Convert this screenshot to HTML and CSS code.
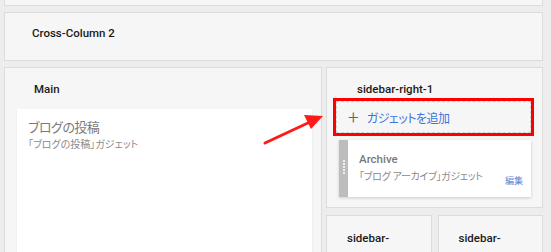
FILE: index.html
```html
<!DOCTYPE html>
<html lang="ja">
<head>
  <meta charset="UTF-8" />
  <title>Layout</title>
  <link rel="stylesheet" href="styles.css">
</head>
<body>

<div class="layout">
  <div class="section top-cut"></div>

  <div class="section cross">
    <div class="section-title">Cross-Column 2</div>
  </div>

  <div class="columns">
    <div class="section main">
      <div class="section-title">Main</div>
      <div class="widget-card">
        <div class="widget-name">ブログの投稿</div>
        <div class="widget-type">「ブログの投稿」ガジェット</div>
      </div>
    </div>

    <div class="sidebar">
      <div class="section side-one">
        <div class="section-title">sidebar-right-1</div>
        <div class="highlight">
          <div class="add-gadget">
            <span class="plus">+</span>
            <span class="add-text">ガジェットを追加</span>
          </div>
        </div>
        <div class="gadget">
          <div class="handle"><span class="dots"></span></div>
          <div class="gadget-body">
            <div class="gadget-name">Archive</div>
            <div class="gadget-type">「ブログ アーカイブ」ガジェット</div>
            <div class="edit">編集</div>
          </div>
        </div>
      </div>

      <div class="side-row">
        <div class="section small">
          <div class="section-title">sidebar-right-2-1</div>
        </div>
        <div class="section small">
          <div class="section-title">sidebar-right-2-2</div>
        </div>
      </div>
    </div>
  </div>
</div>

<svg class="arrow" width="551" height="252" viewBox="0 0 551 252">
  <line x1="265" y1="143" x2="310" y2="122" stroke="#ff1a1a" stroke-width="3" stroke-linecap="round"/>
  <polygon points="323,116 304,115 311,129" fill="#ff1a1a"/>
</svg>

</body>
</html>
```

FILE: styles.css
```css
body {
  margin: 0;
  background: #ededed;
  font-family: Roboto, "Noto Sans CJK JP", sans-serif;
  font-feature-settings: "palt";
  overflow: hidden;
  height: 252px;
}

.layout {
  width: 539px;
  margin-left: 4px;
  display: flex;
  flex-direction: column;
  gap: 6px;
}

.section {
  background: #f6f6f6;
  border: 1px solid #dcdcdc;
  box-sizing: border-box;
}

.top-cut {
  height: 6px;
  border-top: none;
}

.section-title {
  font-size: 11.5px;
  line-height: 16px;
  font-weight: 500;
  color: #1a1a1a;
}

.cross {
  height: 49px;
  padding: 12px 27px;
}

.columns {
  display: flex;
  gap: 4px;
  align-items: flex-start;
}

.main {
  width: 318px;
  height: 200px;
  padding: 13px 9px 0 12px;
}

.main .section-title {
  padding-left: 17px;
  margin-bottom: 12px;
}

.widget-card {
  background: #fff;
  height: 160px;
  padding: 10px 11px;
  box-shadow: 0 1px 2px rgba(0, 0, 0, 0.08);
}

.widget-name {
  font-size: 13px;
  line-height: 18px;
  letter-spacing: -0.5px;
  color: #7a7a7a;
}

.widget-type {
  font-size: 10px;
  line-height: 16px;
  color: #8a8a8a;
}

.sidebar {
  width: 217px;
  display: flex;
  flex-direction: column;
  gap: 7px;
}

.side-one {
  padding: 13px 0 10px;
}

.side-one .section-title {
  padding-left: 30px;
  margin-bottom: 1px;
}

.highlight {
  margin: 0 8px 0 6px;
  border: 3px solid #ff0000;
}

.add-gadget {
  height: 32px;
  border: 1px dashed #d2d2d2;
  box-sizing: border-box;
  display: flex;
  align-items: center;
  padding-left: 11px;
  gap: 8px;
}

.plus {
  font-size: 19px;
  font-weight: 300;
  color: #666;
  line-height: 1;
}

.add-text {
  font-size: 12px;
  letter-spacing: -0.5px;
  color: #3d74dc;
}

.gadget {
  display: flex;
  margin: 4px 11px 0 12px;
  height: 57px;
  box-shadow: 0 1px 3px rgba(0, 0, 0, 0.18);
}

.handle {
  width: 9px;
  background: #bdbdbd;
  display: flex;
  justify-content: center;
  padding-top: 20px;
  box-sizing: border-box;
}

.dots {
  width: 2px;
  height: 15px;
  background: repeating-linear-gradient(#f2f2f2 0 2px, transparent 2px 3px);
}

.gadget-body {
  flex: 1;
  background: #fff;
  padding: 11px 8px 0 11px;
  position: relative;
}

.gadget-name {
  font-size: 11.5px;
  line-height: 16px;
  font-weight: 500;
  color: #7a7a7a;
}

.gadget-type {
  font-size: 10px;
  line-height: 20px;
  letter-spacing: -0.3px;
  color: #8a8a8a;
}

.edit {
  position: absolute;
  right: 8px;
  bottom: 10px;
  font-size: 9px;
  color: #5a86d6;
}

.side-row {
  display: flex;
  gap: 6px;
}

.small {
  flex: 1;
  height: 60px;
  padding: 13px 20px 0;
}

.small .section-title {
  line-height: 19px;
}

.arrow {
  position: absolute;
  left: 0;
  top: 0;
  pointer-events: none;
}
```
